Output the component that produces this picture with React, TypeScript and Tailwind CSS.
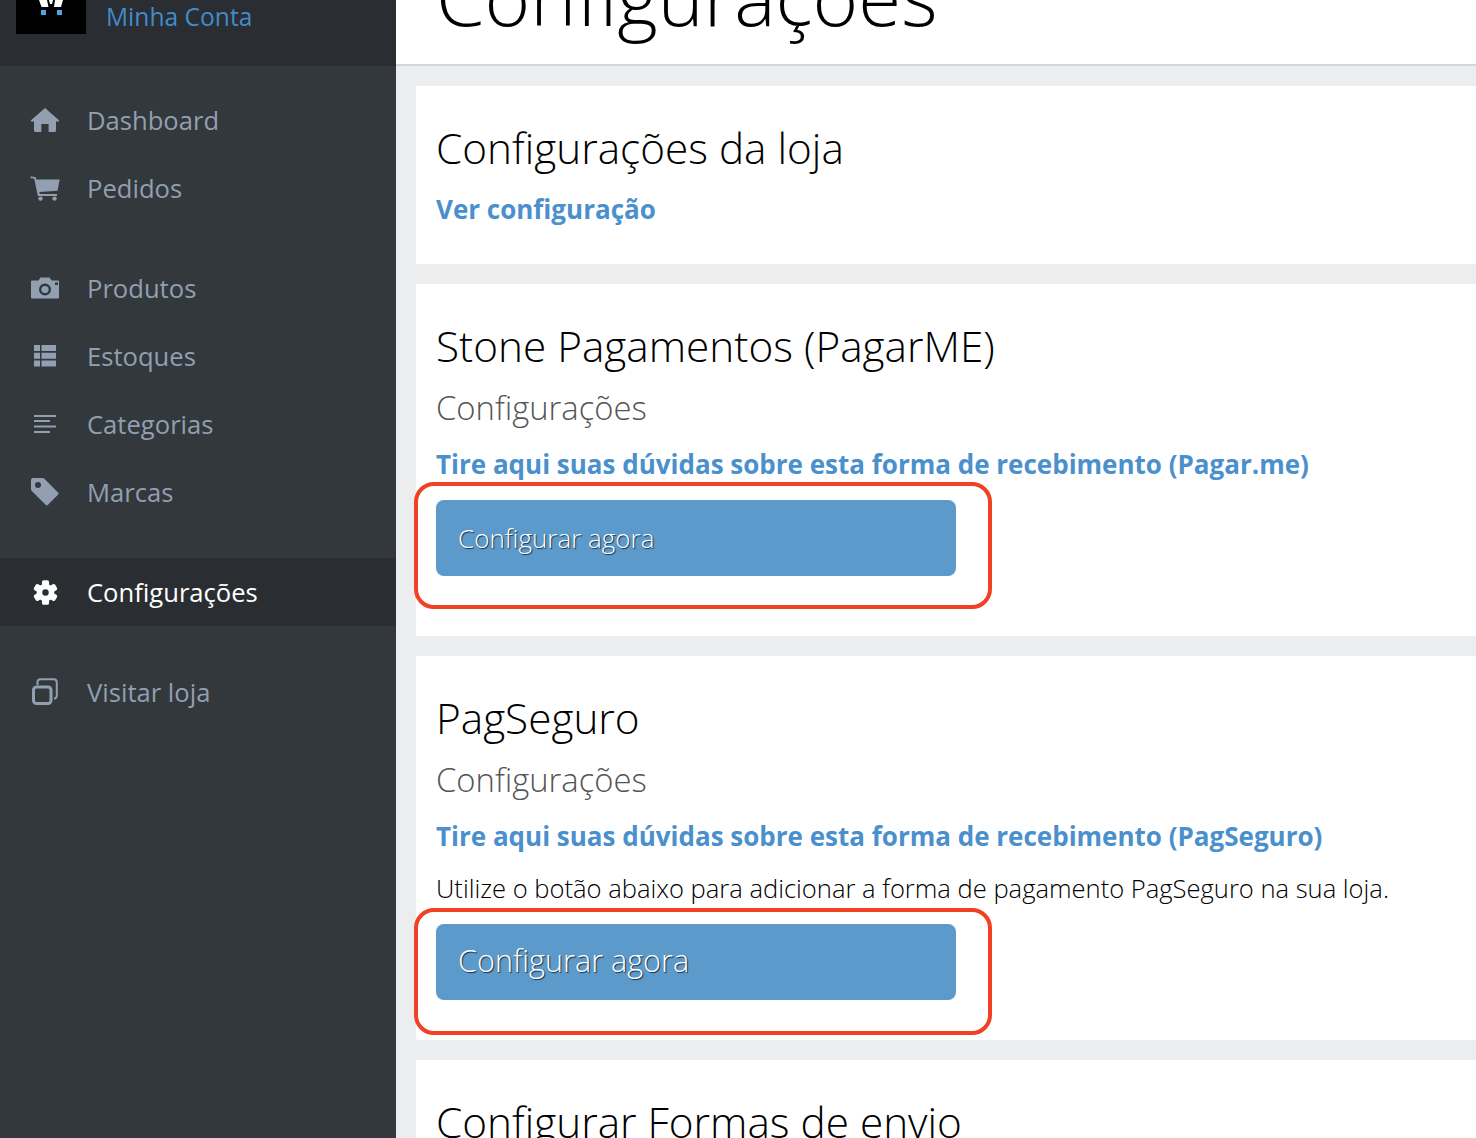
import type { ReactNode } from "react";

const font = "font-['Open_Sans',sans-serif]";

function HomeIcon() {
  return (
    <svg viewBox="0 0 30 26" className="h-[26px] w-[30px] fill-current">
      <path d="M15 1 L29 13.2 Q29.6 14.2 28.4 14.4 L26 14.4 L26 23.5 Q26 25 24.5 25 L18.6 25 L18.6 17 L11.4 17 L11.4 25 L5.5 25 Q4 25 4 23.5 L4 14.4 L1.6 14.4 Q0.4 14.2 1 13.2 Z" />
    </svg>
  );
}

function CartIcon() {
  return (
    <svg viewBox="0 0 30 26" className="h-[26px] w-[30px] fill-current">
      <path d="M0.5 1.5 L5.6 2 L6.4 4.6 L29.6 4.6 L27.6 15.8 L9.4 17 L9.8 19 L27 19 L27 21 L7.8 21 L4.2 3.6 L0.5 3.2 Z" />
      <circle cx="10.5" cy="23.6" r="2.2" />
      <circle cx="24.5" cy="23.6" r="2.2" />
    </svg>
  );
}

function CameraIcon() {
  return (
    <svg viewBox="0 0 28 22" className="h-[22px] w-[28px]">
      <path
        className="fill-current"
        fillRule="evenodd"
        d="M1 3.5 L7.5 3.5 L9.5 0.5 L18.5 0.5 L20.5 3.5 L27 3.5 Q28 3.5 28 4.5 L28 20.5 Q28 21.5 27 21.5 L1 21.5 Q0 21.5 0 20.5 L0 4.5 Q0 3.5 1 3.5 Z M14 6.5 A6 6 0 1 0 14 18.5 A6 6 0 1 0 14 6.5 Z M24 5.5 L24 8 L27 8 L27 5.5 Z"
      />
      <circle cx="14" cy="12.5" r="3.6" className="fill-current" />
    </svg>
  );
}

function TableIcon() {
  return (
    <svg viewBox="0 0 22 22" className="h-[22px] w-[22px] fill-current">
      <path d="M0 0h6v6H0zM7.5 0H22v6H7.5zM0 7.7h6v6H0zM7.5 7.7H22v6H7.5zM0 15.4h6v6H0zM7.5 15.4H22v6H7.5z" />
    </svg>
  );
}

function LinesIcon() {
  return (
    <svg viewBox="0 0 22 20" className="h-[20px] w-[22px] fill-current">
      <path d="M0 1h22v2H0zM0 6h16v2H0zM0 11.5h22v2H0zM0 17h16v2H0z" />
    </svg>
  );
}

function TagIcon() {
  return (
    <svg viewBox="0 0 28 28" className="h-[28px] w-[28px] fill-current">
      <path
        fillRule="evenodd"
        d="M0 2 Q0 0 2 0 L11.5 0 Q12.6 0 13.4 0.8 L27 14.4 Q28.2 15.6 27 16.8 L17 26.8 Q15.8 28 14.6 26.8 L1 13.2 Q0 12.2 0 11 Z M7 4 A3 3 0 1 0 7 10 A3 3 0 1 0 7 4 Z"
      />
    </svg>
  );
}

function GearIcon() {
  return (
    <svg viewBox="0 0 24 24" className="h-[25px] w-[25px] fill-current">
      <circle cx="12" cy="12" r="8.4" />
      {[0, 60, 120, 180, 240, 300].map((a) => (
        <rect key={a} x="8.6" y="0.2" width="6.8" height="7" rx="1.8" transform={`rotate(${a} 12 12)`} />
      ))}
      <circle cx="12" cy="12" r="3.1" fill="#2a2d32" />
    </svg>
  );
}

function StackIcon() {
  return (
    <svg viewBox="0 0 26 27" fill="none" stroke="currentColor" className="h-[27px] w-[26px] -translate-y-[1px]">
      <rect x="1.5" y="9" width="17.5" height="16.5" rx="3" strokeWidth="3" />
      <path d="M5.5 7 V4 Q5.5 1.2 8.5 1.2 H21.5 Q24.8 1.2 24.8 4.5 V17.5 Q24.8 20.4 22 20.8" strokeWidth="2" />
    </svg>
  );
}

function LogoMark() {
  return (
    <svg viewBox="0 0 70 34" className="h-[34px] w-[70px]">
      <rect width="70" height="34" fill="#000" />
      <path d="M23 0h8l1.5 7h-7zM33 0h4l-1 4h-2zM39 0h8l-2 7h-7z" fill="#fff" />
      <path d="M25 10h5v5h-5zM41 10h5v5h-5z" fill="#4aa8df" />
    </svg>
  );
}

function NavItem({
  icon,
  label,
  active,
  className,
}: {
  icon: ReactNode;
  label: string;
  active?: boolean;
  className?: string;
}) {
  return (
    <a
      className={`flex h-[68px] items-center ${active ? "bg-[#2a2d32] text-white" : "text-[#919fb0]"} ${className ?? ""}`}
    >
      <span className="w-[87px] shrink-0 pl-[30px]">
        <span className="flex w-[30px] justify-center">{icon}</span>
      </span>
      <span className="pt-[2px] text-[25.6px] leading-none">{label}</span>
    </a>
  );
}

function Sidebar() {
  return (
    <aside className="flex w-[396px] shrink-0 flex-col bg-[#33383d]">
      <div className="flex h-[66px] items-start gap-[20px] overflow-hidden bg-[#2a2d32] pl-4">
        <LogoMark />
        <a className="pt-[1px] text-[24.6px] leading-[32px] font-normal text-[#428bca]">Minha Conta</a>
      </div>
      <nav className="flex flex-col pt-[20px]">
        <NavItem icon={<HomeIcon />} label="Dashboard" />
        <NavItem icon={<CartIcon />} label="Pedidos" />
        <NavItem icon={<CameraIcon />} label="Produtos" className="mt-[32px]" />
        <NavItem icon={<TableIcon />} label="Estoques" />
        <NavItem icon={<LinesIcon />} label="Categorias" />
        <NavItem icon={<TagIcon />} label="Marcas" />
        <NavItem icon={<GearIcon />} label="Configurações" active className="mt-[32px]" />
        <NavItem icon={<StackIcon />} label="Visitar loja" className="mt-[32px]" />
      </nav>
    </aside>
  );
}

function ConfigButton({ small }: { small?: boolean }) {
  return (
    <div className="relative w-[520px]">
      <a
        className={`flex h-[76px] items-center rounded-[8px] bg-[#5c9acb] pl-[22px] font-light text-white [text-shadow:1px_1px_1px_rgba(0,0,0,0.7)] ${small ? "text-[26px]" : "pb-[2px] text-[30.6px]"}`}
      >
        Configurar agora
      </a>
      <div
        className={`absolute right-[-36px] left-[-22px] rounded-[20px] border-[4px] border-[#f04124] ${small ? "top-[-18px] bottom-[-33px]" : "top-[-16px] bottom-[-35px]"}`}
      />
    </div>
  );
}

function Card({ title, children, className }: { title: string; children?: ReactNode; className?: string }) {
  return (
    <section className={`bg-white pt-[32px] pl-[20px] ${className ?? ""}`}>
      <h2 className="text-[42.3px] leading-[60px] font-light text-black">{title}</h2>
      {children}
    </section>
  );
}

function Subtitle() {
  return <h3 className="mt-[6px] text-[32.8px] leading-[52px] font-light text-[#555]">Configurações</h3>;
}

function HelpLink({ children }: { children: ReactNode }) {
  return <a className="mt-[4px] block text-[26px] leading-[52px] font-bold text-[#4a90cc]">{children}</a>;
}

export default function App() {
  return (
    <div className={`flex h-[1138px] w-[1476px] overflow-hidden bg-[#ecedef] ${font}`}>
      <Sidebar />
      <main className="min-w-0 flex-1">
        <header className="flex h-[66px] items-end overflow-hidden border-b-2 border-[#d5d6d8] bg-white pl-[40px]">
          <h1 className="mb-[28px] text-[78px] leading-[80px] font-light whitespace-nowrap text-black">Configurações</h1>
        </header>
        <div className="flex flex-col gap-[20px] pt-[20px] pl-[20px]">
          <Card title="Configurações da loja" className="h-[178px]">
            <a className="block pt-[5px] text-[26px] leading-[52px] font-bold text-[#4a90cc]">Ver configuração</a>
          </Card>
          <Card title="Stone Pagamentos (PagarME)" className="h-[352px]">
            <Subtitle />
            <HelpLink>Tire aqui suas dúvidas sobre esta forma de recebimento (Pagar.me)</HelpLink>
            <div className="pt-[10px]">
              <ConfigButton small />
            </div>
          </Card>
          <Card title="PagSeguro" className="h-[384px]">
            <Subtitle />
            <HelpLink>Tire aqui suas dúvidas sobre esta forma de recebimento (PagSeguro)</HelpLink>
            <p className="text-[25.56px] leading-[52px] font-light whitespace-nowrap text-black">
              Utilize o botão abaixo para adicionar a forma de pagamento PagSeguro na sua loja.
            </p>
            <div className="pt-[10px]">
              <ConfigButton />
            </div>
          </Card>
          <Card title="Configurar Formas de envio" className="h-[100px]" />
        </div>
      </main>
    </div>
  );
}
